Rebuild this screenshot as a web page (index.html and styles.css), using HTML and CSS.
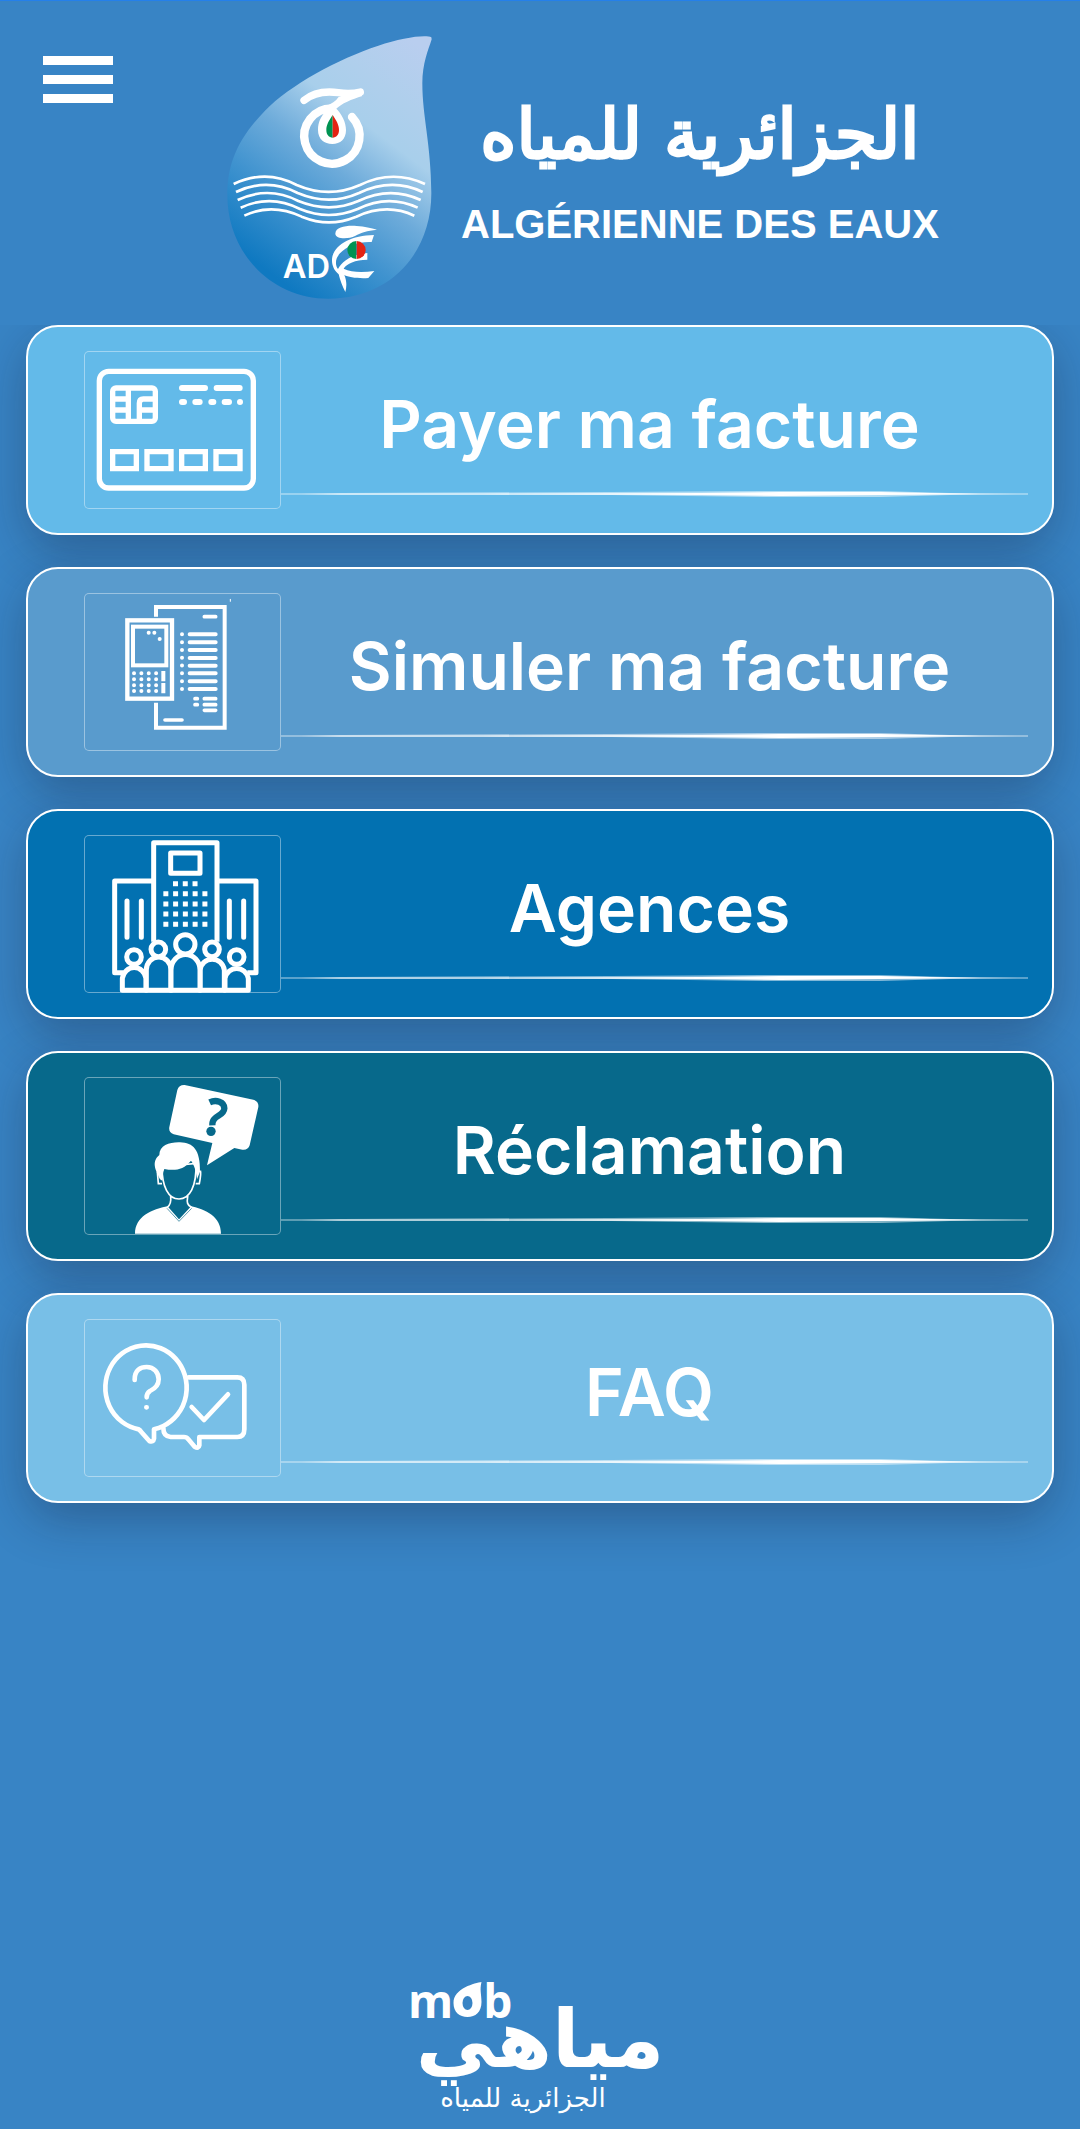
FILE: index.html
```html
<!DOCTYPE html>
<html lang="fr">
<head>
  <meta charset="UTF-8" />
  <meta name="viewport" content="width=device-width, initial-scale=1.0" />
  <title>Algérienne des Eaux</title>
  <link rel="stylesheet" href="styles.css">
</head>
<body>
  <header class="header">
    <button class="menu-btn" type="button" aria-label="Menu">
      <svg width="70" height="47" viewBox="0 0 70 47" fill="#fff">
        <rect width="70" height="9" />
        <rect y="19" width="70" height="9" />
        <rect y="38" width="70" height="9" />
      </svg>
    </button>

    <!-- emblem -->
    <svg class="emblem" width="230" height="290" viewBox="0 0 690 870" aria-hidden="true">
      <defs>
        <linearGradient id="water" gradientUnits="userSpaceOnUse" x1="140" y1="740" x2="630" y2="90">
          <stop offset="0" stop-color="#0f79c1" />
          <stop offset="0.25" stop-color="#4093cf" />
          <stop offset="0.45" stop-color="#6dabda" />
          <stop offset="0.65" stop-color="#a8cfeb" />
          <stop offset="0.8" stop-color="#afcfec" />
          <stop offset="1" stop-color="#b9ceef" />
        </linearGradient>
      </defs>
      <path fill="url(#water)" d="M649 52 C632 43 560 53 490 77 C370 116 225 195 150 272 C65 360 37 435 37 525 C37 700 170 836 340 836 C525 836 649 700 649 520 C648 370 622 290 622 190 C622 130 640 90 650 58 Z" />
      <g fill="none" stroke="#fff" stroke-width="25" stroke-linecap="round">
        <path d="M411 291 A83 83 0 1 1 351 265" />
        <path stroke-width="22" d="M267 241 C300 214 335 213 370 218 C400 222 415 221 436 216" />
      </g>
      <path fill="#fff" d="M370 232 Q362 246 334 258 L362 268 C380 250 410 238 442 228 L430 208 Z" />
      <path fill="#fff" d="M345 258 L362 264 C380 282 393 306 393 330 C393 358 376 372 352 372 C328 372 309 358 309 330 C309 306 318 290 330 276 Z" />
      <path fill="#009352" d="M353 285 C342 302 334 314 334 330 C334 344 342 353 353 353 Z" />
      <path fill="#e42313" d="M353 285 C364 302 372 314 372 330 C372 344 364 353 353 353 Z" />
      <g fill="none" stroke="#fff" stroke-width="8">
        <path d="M56 492 C120 462 185 463 245 495 C310 523 372 523 435 495 C500 463 565 462 630 492" />
        <path d="M63 516 C125 487 188 488 248 519 C312 546 372 546 432 519 C497 488 562 487 623 516" />
        <path d="M68 540 C130 511 190 512 250 543 C314 569 370 569 430 543 C494 512 555 511 617 540" />
        <path d="M77 563 C138 535 195 536 255 567 C315 592 368 592 428 567 C490 536 548 535 608 563" />
        <path d="M88 587 C145 560 200 562 260 590 C318 613 366 613 424 590 C485 562 540 560 598 587" />
      </g>
      <text class="emblem-text" x="203" y="774">AD</text>
      <path fill="#fff" d="M361 641 C362 620 395 616 425 618 C450 619 468 625 486 629 C455 632 440 637 420 648 C400 658 361 658 361 641 Z" />
      <path fill="#fff" d="M477 645 L470 666 C430 664 395 678 375 700 C360 716 360 735 369 747 C380 725 410 702 457 699 L457 719 C420 720 395 730 386 746 C410 758 445 757 478 753 L460 774 C430 776 400 772 388 765 C396 785 395 800 391 816 C382 798 375 780 371 763 C355 750 348 730 352 710 C362 672 410 646 477 645 Z" />
      <path fill="#009352" d="M424 663 A27 27 0 0 0 424 717 Z" />
      <path fill="#e42313" d="M425 663 A27 27 0 0 1 425 717 Z" />
    </svg>

    <div class="brand">
      <div class="brand-ar" lang="ar" dir="rtl">الجزائرية للمياه</div>
      <div class="brand-fr">ALGÉRIENNE DES EAUX</div>
    </div>
  </header>

  <svg class="defs" width="0" height="0" aria-hidden="true">
    <symbol id="stroke" viewBox="0 0 748 8" preserveAspectRatio="none">
      <path fill="#fff" fill-opacity="0.35" d="M0 3 H748 V5 H0 Z" />
      <path fill="#fff" fill-opacity="0.5" d="M20 4 L60 3 L330 2 L480 1 L600 1 L670 3 L740 4 L670 5 L600 7 L490 7 L330 5 L60 5 Z" />
      <path fill="#fff" d="M200 4 L420 3 L500 2 L600 2 L700 4 L600 5 L500 6 L420 5 Z" />
    </symbol>
  </svg>

  <main class="menu">
    <a class="card pay" href="#payer">
      <span class="icon">
        <svg width="197" height="158" viewBox="252 123 591 474" fill="none" stroke="#fff">
          <rect x="298" y="184" width="462" height="350" rx="28" stroke-width="16" />
          <rect x="338" y="234" width="128" height="100" rx="10" stroke-width="16" />
          <path stroke-width="16" d="M385 234 V334 M338 267 H385 M338 300 H385 M466 267 H430 Q418 267 418 280 V334 M418 300 H466" />
          <path stroke-width="18" stroke-linecap="round" d="M546 234 H615 M650 234 H719 M546 276 H552 M586 276 H599 M634 276 H640 M674 276 H687 M720 276 H720" />
          <path stroke-width="16" d="M338 425 H409 V476 H338 Z M441 425 H513 V476 H441 Z M545 425 H616 V476 H545 Z M648 425 H720 V476 H648 Z" />
        </svg>
      </span>
      <span class="body">
        <span class="title">Payer ma facture</span>
        <svg class="line"><use href="#stroke" /></svg>
      </span>
    </a>

    <a class="card simulate" href="#simuler">
      <span class="icon">
        <svg width="197" height="158" viewBox="72 69 591 474" fill="none" stroke="#fff" stroke-linecap="round">
          <path stroke-width="12" stroke-linecap="butt" d="M288 140 V111 H494 V473 H288 V398" />
          <rect x="202" y="151" width="134" height="235" stroke-width="13" />
          <rect x="219" y="170" width="100" height="116" stroke-width="12" />
          <path stroke-width="12" d="M266 188 h0.1 M283 188 h0.1 M299 207 h0.1" />
          <path stroke-width="12" stroke-dasharray="0.1 22" d="M222 310 H290 M222 328 H290 M222 346 H290 M222 363 H290" />
          <path stroke-width="12" stroke-linecap="butt" d="M310 303 V334 M310 339 V370" />
          <path stroke-width="12" stroke-dasharray="0.1 23.3" d="M366 193 V360" />
          <path stroke-width="12" d="M389 193 H467 M389 217 H467 M389 240 H467 M389 264 H467 M389 287 H467 M389 310 H467 M389 334 H467 M389 357 H467" />
          <path stroke-width="11" d="M433 140 H467 M405 386 H412 M433 386 H467 M405 404 H412 M433 404 H467 M433 421 H467 M315 450 H366" />
          <path stroke-width="3" d="M511 88 V94" />
        </svg>
      </span>
      <span class="body">
        <span class="title">Simuler ma facture</span>
        <svg class="line"><use href="#stroke" /></svg>
      </span>
    </a>

    <a class="card agencies" href="#agences">
      <span class="icon">
        <svg width="197" height="158" viewBox="72 75 591 474" fill="none" stroke="#fff" stroke-width="15" stroke-linejoin="round">
          <path d="M281 395 V98 H471 V395 M281 213 H164 V488 H190 M471 213 H588 V488 H562" />
          <rect x="332" y="129" width="88" height="61" />
          <path stroke-linecap="round" d="M201 273 V382 M244 273 V382 M508 273 V382 M551 273 V382" />
          <path stroke-dasharray="15 14.3" d="M339 221 H413 M310 251 H443 M310 282 H443 M310 312 H443 M310 343 H443" />
          <g fill="#0271b1">
            <path d="M187 541 V505 A36 39 0 0 1 258 505 V541 Z M495 541 V505 A36 39 0 0 1 565 505 V541 Z" />
            <path d="M259 541 V480 A37 39 0 0 1 333 480 V541 Z M420 541 V480 A37 39 0 0 1 493 480 V541 Z" />
            <path d="M333 541 V480 A43 46 0 0 1 420 480 V541 Z" />
            <circle cx="222" cy="441" r="22" />
            <circle cx="530" cy="441" r="22" />
            <circle cx="295" cy="418" r="22" />
            <circle cx="456" cy="418" r="22" />
            <circle cx="376" cy="403" r="29" />
          </g>
        </svg>
      </span>
      <span class="body">
        <span class="title">Agences</span>
        <svg class="line"><use href="#stroke" /></svg>
      </span>
    </a>

    <a class="card claim" href="#reclamation">
      <span class="icon">
        <svg width="197" height="158" viewBox="72 81 591 474" fill="#fff">
          <path d="M374 105 L580 149 Q597 154 595 171 L569 286 Q564 301 547 299 L523 294 L441 346 L457 279 L341 253 Q325 247 328 231 L352 120 Q357 104 374 105 Z" />
          <path fill="none" stroke="#07698b" stroke-width="19" d="M449 157 C468 148 493 155 493 175 C492 200 455 195 457 226" />
          <circle cx="453" cy="244" r="14" fill="#07698b" />
          <path d="M225 551 C226 500 270 478 330 467 L357 512 L387 467 C440 478 483 500 483 551 Z" />
          <path fill="#07698b" stroke="#fff" stroke-width="5" d="M332 440 C334 458 331 465 322 472 L357 512 L394 472 C382 465 380 458 383 440 Z" />
          <path fill="none" stroke="#07698b" stroke-width="2" d="M321 475 L357 514 L395 475" />
          <path fill="none" stroke="#fff" stroke-width="5" d="M292 365 L295 401 H306 M421 362 Q424 370 418 401 H407" />
          <path fill="#07698b" stroke="#fff" stroke-width="5" d="M306 350 C306 410 325 447 357 447 C389 447 410 410 408 340 Z" />
          <path d="M300 388 C292 370 284 357 284 342 C285 327 292 320 298 315 C298 285 330 276 360 277 C400 278 421 300 420 365 L411 388 C409 365 402 343 393 332 C370 360 345 363 313 357 C307 370 309 382 307 392 Z" />
        </svg>
      </span>
      <span class="body">
        <span class="title">Réclamation</span>
        <svg class="line"><use href="#stroke" /></svg>
      </span>
    </a>

    <a class="card faq" href="#faq">
      <span class="icon">
        <svg width="197" height="158" viewBox="252 87 591 474" fill="none" stroke="#fff" stroke-width="14" stroke-linecap="round" stroke-linejoin="round">
          <path d="M416 418 A122 127 0 1 1 490 408 Q477 415 462 418 V446 Q460 458 448 453 L424 426 Q420 420 416 418 Z" />
          <path d="M404 270 C403 240 422 231 440 231 C462 231 476 248 476 268 C476 288 463 297 450 303 Q440 309 440 322 M439 352 h1" />
          <path d="M566 262 H712 Q733 262 733 284 V418 Q733 441 712 441 H598 V466 Q596 477 584 470 L565 448 Q560 441 552 441 H512 Q490 439 490 414" />
          <path d="M575 351 L612 390 L684 313" />
        </svg>
      </span>
      <span class="body">
        <span class="title">FAQ</span>
        <svg class="line"><use href="#stroke" /></svg>
      </span>
    </a>
  </main>

  <footer class="footer">
    <div class="mob">m<svg width="30" height="36" viewBox="0 0 29 36"><path fill="#fff" fill-rule="evenodd" d="M28 0 C22 1 0 6 0 21 C0 30 6 35 14 35 C22 35 28 30 28 20 C28 12 26 8 28 0 Z M14 14 A5 7 0 1 0 14 28 A5 7 0 1 0 14 14 Z" /></svg>b</div>
    <div class="miyahi" lang="ar" dir="rtl">مياهي</div>
    <div class="footer-ar" lang="ar" dir="rtl">الجزائرية للمياه</div>
  </footer>
</body>
</html>
```
FILE: styles.css
```css
* { box-sizing: border-box; }

body {
  margin: 0;
  min-height: 100vh;
  display: flex;
  flex-direction: column;
  background: #3884c5;
  border-top: 1px solid #2580ea;
  color: white;
  font-family: Inter, "Noto Sans", sans-serif;
}

.defs { position: absolute; }

/* header stays above the shadow of the first card */
.header {
  position: relative;
  z-index: 1;
  display: flex;
  align-items: flex-start;
  height: 324px;
  padding: 19px 24px 0 43px;
}

.menu-btn {
  margin-top: 36px;
  padding: 0;
  border: 0;
  background: none;
  cursor: pointer;
}

.menu-btn svg { display: block; }

.emblem {
  flex: none;
  margin-left: 102px;
}

.emblem-text {
  font-family: Inter, sans-serif;
  font-size: 98px;
  font-weight: 600;
  fill: white;
}

.brand {
  margin-left: 16px;
  padding-top: 64px;
  text-align: center;
  white-space: nowrap;
}

.brand-ar {
  font-family: "DejaVu Sans", sans-serif;
  font-size: 69px;
  line-height: 100px;
  -webkit-text-stroke: 3px white;
}

.brand-fr {
  margin-top: 16px;
  font-family: "Liberation Sans", sans-serif;
  font-size: 40px;
  font-weight: bold;
  line-height: 48px;
}

/* cards */
.menu {
  display: flex;
  flex-direction: column;
  gap: 32px;
  padding: 0 26px;
  clip-path: inset(0 0 -100px 0);
}

.card {
  display: flex;
  height: 210px;
  padding: 24px 24px 24px 56px;
  border: 2px solid white;
  border-radius: 32px;
  box-shadow: 0 16px 50px rgba(20, 20, 40, 0.3);
  color: white;
  text-decoration: none;
}

.pay { background: #63bae9; }
.simulate { background: #599bcd; }
.agencies { background: #0271b1; }
.claim { background: #07698b; }
.faq { background: #78bfe7; }

.icon {
  flex: none;
  width: 197px;
  height: 158px;
  border-radius: 5px;
  box-shadow: inset 0 0 0 1px rgba(255, 255, 255, 0.4);
}

.icon svg { display: block; }

.body {
  flex: 1;
  display: flex;
  flex-direction: column;
  padding-bottom: 11px;
}

.title {
  flex: 1;
  display: flex;
  align-items: center;
  justify-content: center;
  padding: 6px 10px 0 0;
  font-size: 66px;
  font-weight: 600;
  line-height: 80px;
  white-space: nowrap;
}

.line {
  width: 100%;
  height: 8px;
}

/* footer */
.footer {
  width: 264px;
  margin: auto auto 0;
  padding-bottom: 3px;
}

.mob {
  display: flex;
  align-items: baseline;
  height: 36px;
  font-family: "Open Sans", sans-serif;
  font-size: 46px;
  font-weight: bold;
  line-height: 36px;
}

.miyahi {
  font-family: "DejaVu Sans", sans-serif;
  font-size: 80px;
  font-weight: bold;
  line-height: 44px;
  text-align: center;
}

.footer-ar {
  margin-top: 8px;
  padding-right: 34px;
  font-family: "DejaVu Sans", sans-serif;
  font-size: 26px;
  line-height: 56px;
  text-align: center;
}
```
